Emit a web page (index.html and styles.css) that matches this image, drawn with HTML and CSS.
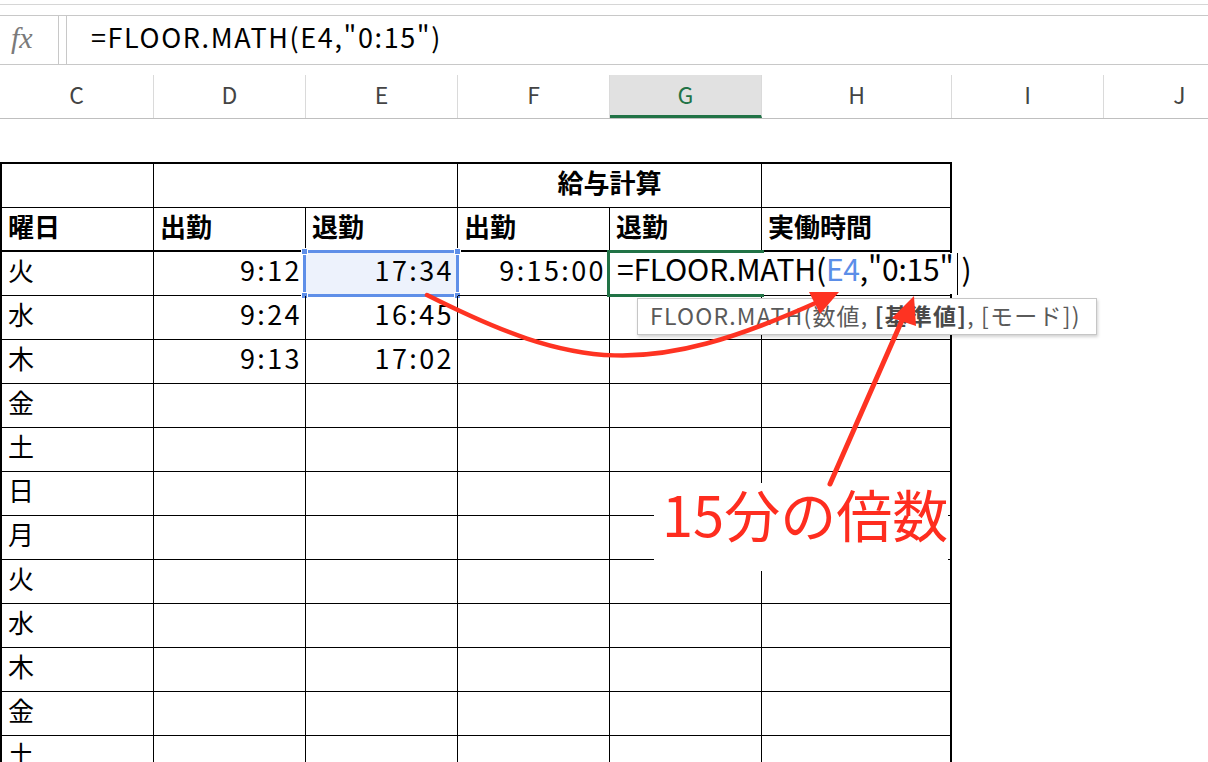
FILE: index.html
```html
<!DOCTYPE html>
<html lang="ja">
<head>
<meta charset="utf-8">
<title>FLOOR.MATH</title>
<link rel="stylesheet" href="styles.css">
</head>
<body>
<div class="app">
  <div class="topline"></div>
  <div class="fbar">
    <div class="fx">fx</div>
    <div class="finput">=FLOOR.MATH(E4,"0:15")</div>
  </div>
  <div class="colheads">
    <div class="ch c">C</div>
    <div class="ch">D</div>
    <div class="ch">E</div>
    <div class="ch">F</div>
    <div class="ch active">G</div>
    <div class="ch h">H</div>
    <div class="ch">I</div>
    <div class="ch">J</div>
  </div>
  <div class="sheet">
    <div class="spacer"></div>
    <div class="grid">
      <div class="cell"></div>
      <div class="cell span2"></div>
      <div class="cell span2 hd-top">給与計算</div>
      <div class="cell last"></div>

      <div class="cell hd">曜日</div>
      <div class="cell hd">出勤</div>
      <div class="cell hd">退勤</div>
      <div class="cell hd">出勤</div>
      <div class="cell hd">退勤</div>
      <div class="cell hd last">実働時間</div>

      <div class="cell">火</div>
      <div class="cell num">9:12</div>
      <div class="cell num selected">17:34<div class="selbox"><i class="hdl tl"></i><i class="hdl tr"></i><i class="hdl bl"></i><i class="hdl br"></i></div></div>
      <div class="cell num">9:15:00</div>
      <div class="cell active"><div class="actbox"></div><div class="editor"><span>=FLOOR.MATH(</span><span class="ref">E4</span><span>,"0:15"</span><span class="caret"></span><span>)</span></div></div>
      <div class="cell last"></div>

      <div class="cell">水</div>
      <div class="cell num">9:24</div>
      <div class="cell num">16:45</div>
      <div class="cell"></div>
      <div class="cell"></div>
      <div class="cell last"></div>

      <div class="cell">木</div>
      <div class="cell num">9:13</div>
      <div class="cell num">17:02</div>
      <div class="cell"></div>
      <div class="cell"></div>
      <div class="cell last"></div>

      <div class="cell">金</div><div class="cell"></div><div class="cell"></div><div class="cell"></div><div class="cell"></div><div class="cell last"></div>
      <div class="cell">土</div><div class="cell"></div><div class="cell"></div><div class="cell"></div><div class="cell"></div><div class="cell last"></div>
      <div class="cell">日</div><div class="cell"></div><div class="cell"></div><div class="cell"></div><div class="cell"></div><div class="cell last"></div>
      <div class="cell">月</div><div class="cell"></div><div class="cell"></div><div class="cell"></div><div class="cell"></div><div class="cell last"></div>
      <div class="cell">火</div><div class="cell"></div><div class="cell"></div><div class="cell"></div><div class="cell"></div><div class="cell last"></div>
      <div class="cell">水</div><div class="cell"></div><div class="cell"></div><div class="cell"></div><div class="cell"></div><div class="cell last"></div>
      <div class="cell">木</div><div class="cell"></div><div class="cell"></div><div class="cell"></div><div class="cell"></div><div class="cell last"></div>
      <div class="cell">金</div><div class="cell"></div><div class="cell"></div><div class="cell"></div><div class="cell"></div><div class="cell last"></div>
      <div class="cell">土</div><div class="cell"></div><div class="cell"></div><div class="cell"></div><div class="cell"></div><div class="cell last"></div>
    </div>
  </div>

  <div class="tooltip">FLOOR.MATH(数値,&nbsp;<b>[基準値]</b>,&nbsp;[モード])</div>

  <div class="label">15分の倍数</div>

  <svg class="arrows" width="1208" height="762" viewBox="0 0 1208 762">
    <path d="M427,295 C576,370 647,379 820,301" fill="none" stroke="#fe3322" stroke-width="4.5" stroke-linecap="round"/>
    <polygon points="839,292 809,292 820,314" fill="#fe3322"/>
    <line x1="830" y1="484" x2="903" y2="318" stroke="#fe3322" stroke-width="5" stroke-linecap="round"/>
    <polygon points="914,296 892,318 916,326" fill="#fe3322"/>
  </svg>
</div>
</body>
</html>
```

FILE: styles.css
```css
* { box-sizing: border-box; margin: 0; padding: 0; }
html, body { width: 1208px; height: 762px; overflow: hidden; background: #fff; }
body { font-family: "Noto Sans CJK JP", "Noto Sans", sans-serif; color: #000; }

.app { position: relative; width: 1208px; height: 762px; overflow: hidden; }

.topline { height: 5px; border-bottom: 1px solid #d6d6d6; margin-bottom: 10px; }

.fbar { display: flex; height: 50px; border-top: 1px solid #c8c8c8; border-bottom: 1px solid #c8c8c8; }
.fx { width: 59px; flex: none; border-right: 1px solid #c8c8c8; display: flex; align-items: center; padding-left: 11px; padding-bottom: 4px;
  font-family: "Liberation Serif", "DejaVu Serif", serif; font-style: italic; font-size: 30px; color: #7a7a7a; }
.finput { flex: 1; margin-left: 7px; border-left: 1px solid #c8c8c8; padding-left: 24px; padding-bottom: 7px; display: flex; align-items: center;
  font-size: 27px; letter-spacing: 1.6px; }

.colheads { display: flex; height: 44px; margin-top: 10px; border-bottom: 1px solid #bfbfbf; }
.ch { flex: none; width: 152px; border-right: 1px solid #dadada; display: flex; align-items: center; justify-content: center;
  font-size: 23px; color: #444; padding-bottom: 6px; }
.ch.c { width: 154px; }
.ch.h { width: 190px; }
.ch.active { background: #e1e1e1; color: #217346; border-bottom: 3px solid #217346; padding-bottom: 3px; }

.spacer { height: 43px; }
.grid { display: grid; grid-template-columns: 152px 152px 152px 152px 152px 190px; grid-auto-rows: 44px; width: 952px;
  border-left: 2px solid #000; border-top: 2px solid #000; }
.cell { border-right: 1px solid #000; border-bottom: 1px solid #000; display: flex; align-items: center; padding: 0 6px 8px;
  font-size: 26px; position: relative; white-space: nowrap; }
.cell.last { border-right: 2px solid #000; }
.cell.span2 { grid-column: span 2; }
.cell.hd-top { justify-content: center; font-weight: bold; }
.cell.hd { font-weight: bold; border-bottom: 2px solid #000; padding-bottom: 7px; }
.cell.num { justify-content: flex-end; padding-right: 3px; letter-spacing: 2.4px; font-size: 27px; padding-bottom: 8px; }
.cell.selected { background: #edf2fc; }

.selbox { position: absolute; left: -3px; top: -2px; width: 156px; height: 47px; border: 3px solid #5f8fe8; }
.hdl { position: absolute; width: 7px; height: 7px; background: #5f8fe8; border: 1px solid #fff; }
.hdl.tl { left: -5px; top: -5px; }
.hdl.tr { right: -5px; top: -5px; }
.hdl.bl { left: -5px; bottom: -5px; }
.hdl.br { right: -5px; bottom: -5px; }

.cell.active { z-index: 2; }
.actbox { position: absolute; left: -3px; top: -2px; width: 157px; height: 47px; border: 3px solid #217346; }
.editor { position: absolute; left: 0; top: 1px; width: 346px; height: 41px; background: #fff; display: flex; align-items: center;
  padding-left: 7px; padding-bottom: 12px; font-size: 30px; letter-spacing: -0.2px; }
.editor .ref { color: #5b8ee8; }
.editor .caret { flex: none; width: 1px; height: 42px; background: #000; margin: 12px 4px 0 3px; }

.tooltip { position: absolute; left: 637px; top: 298px; width: 460px; height: 37px; background: #fff; border: 1px solid #c6c6c6;
  box-shadow: 1px 2px 3px rgba(0,0,0,0.18); z-index: 3; display: flex; align-items: center; padding-left: 12px; padding-bottom: 4px;
  font-size: 23px; color: #5a5a5a; letter-spacing: 1.2px; white-space: nowrap; }
.tooltip b { color: #4a4a4a; }

.label { position: absolute; left: 654px; top: 483px; width: 294px; height: 88px; background: #fff; z-index: 4;
  padding-left: 8px; padding-top: 2px; font-size: 56px; line-height: 56px; color: #fe2d1f; white-space: nowrap; letter-spacing: 0; }

.arrows { position: absolute; left: 0; top: 0; z-index: 5; pointer-events: none; }
```
